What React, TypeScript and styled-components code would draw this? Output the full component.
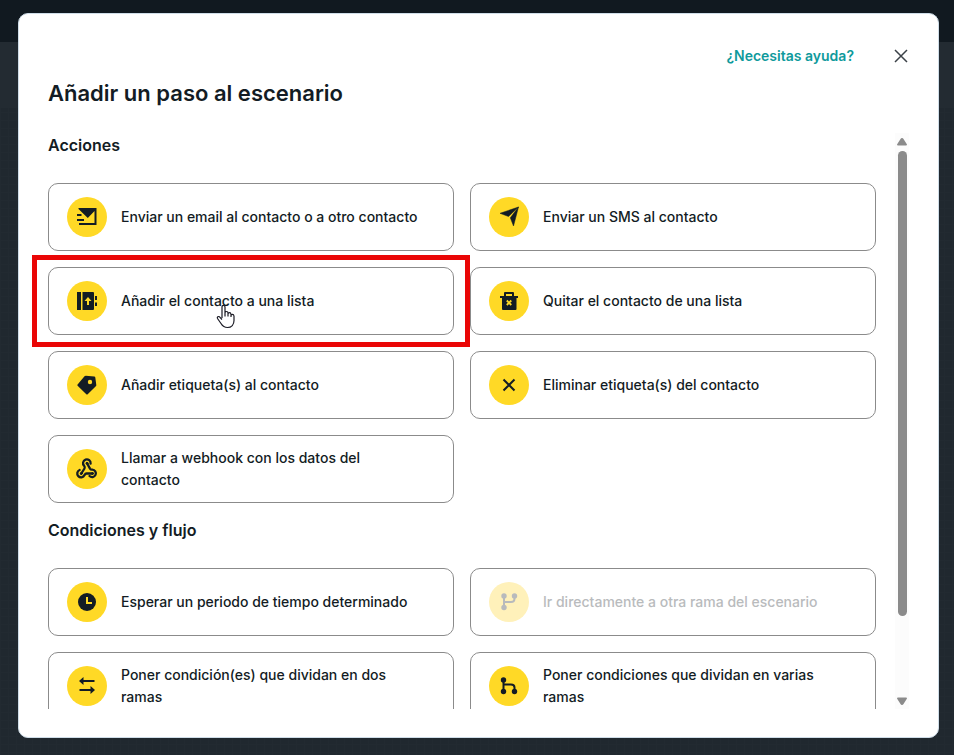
import React from "react";
import styled, { createGlobalStyle } from "styled-components";

const GlobalStyle = createGlobalStyle`
  *, *::before, *::after { box-sizing: border-box; }
  body {
    margin: 0;
    font-family: Inter, "Liberation Sans", sans-serif;
    color: #131c24;
    background: #20282f;
  }
  h1, h2, ul { margin: 0; padding: 0; }
  button { font: inherit; color: inherit; }
`;

const Backdrop = styled.div`
  display: flex;
  height: 100vh;
  padding: 13px 15px 17px 18px;
  background:
    linear-gradient(#111920 0 42px, #232b32 42px 108px, transparent 108px),
    repeating-linear-gradient(90deg, #222a31 0 1px, transparent 1px 8px),
    repeating-linear-gradient(#222a31 0 1px, transparent 1px 8px),
    #20282f;
`;

const Dialog = styled.section`
  flex: 1;
  min-width: 0;
  display: flex;
  flex-direction: column;
  padding: 28px 29px 28px 0;
  border: 1px solid #cfdde8;
  border-radius: 10px;
  background: #fff;
`;

const TopBar = styled.header`
  display: flex;
  justify-content: flex-end;
  align-items: center;
  gap: 39px;
  height: 28px;
`;

const HelpLink = styled.a`
  color: #0f9a9c;
  font-size: 14px;
  line-height: 20px;
  font-weight: 600;
  text-decoration: none;
`;

const CloseButton = styled.button`
  display: flex;
  padding: 0;
  border: 0;
  background: none;
  cursor: pointer;
`;

const Title = styled.h1`
  margin: 7px 0 0 29px;
  font-size: 22px;
  line-height: 32px;
  font-weight: 600;
`;

const Body = styled.div`
  flex: 1;
  min-height: 0;
  display: flex;
  margin-top: 24px;
`;

const ScrollArea = styled.div`
  flex: 1;
  min-width: 0;
  overflow: hidden;
  padding: 0 19px 0 29px;
`;

const SectionTitle = styled.h2`
  font-size: 16px;
  line-height: 24px;
  font-weight: 600;
`;

const StepList = styled.ul`
  display: grid;
  grid-template-columns: repeat(2, minmax(0, 1fr));
  gap: 16px;
  margin: 26px 0 15px;
  list-style: none;
`;

const StepItem = styled.li`
  position: relative;
`;

const StepCard = styled.button`
  display: flex;
  align-items: center;
  gap: 14px;
  width: 100%;
  height: 68px;
  padding: 0 34px 0 18px;
  border: 1px solid #8b8b8b;
  border-radius: 10px;
  background: #fff;
  text-align: left;
  cursor: pointer;
`;

const IconDisc = styled.span<{ $muted?: boolean }>`
  flex: none;
  display: grid;
  place-items: center;
  width: 40px;
  height: 40px;
  border-radius: 50%;
  color: ${(p) => (p.$muted ? "#b8babc" : "#131c24")};
  background: ${(p) => (p.$muted ? "#fff1ba" : "#ffd926")};
`;

const StepLabel = styled.span<{ $muted?: boolean }>`
  font-size: 14px;
  line-height: 22px;
  font-weight: 500;
  color: ${(p) => (p.$muted ? "#b9bbbd" : "inherit")};
`;

const Highlight = styled.div`
  position: absolute;
  z-index: 1;
  inset: -12px -16px;
  border: 5px solid #ea0606;
  pointer-events: none;
`;

const Pointer = styled.svg`
  position: absolute;
  z-index: 2;
  left: 168px;
  top: 37px;
  pointer-events: none;
`;

const Track = styled.div`
  flex: none;
  display: flex;
  flex-direction: column;
  align-items: center;
  gap: 5px;
  width: 14px;
  padding: 5px 0 4px;
  background: #fcfcfc;
  color: #8b8b8b;
`;

const TrackLane = styled.div`
  flex: 1;
  width: 9px;
`;

const Thumb = styled.div`
  height: 86%;
  border-radius: 5px;
  background: #8b8b8b;
`;

type IconName =
  | "email" | "send" | "addList" | "trash" | "tag" | "cross"
  | "webhook" | "clock" | "branch" | "swap" | "split";

const drawings: Record<IconName, React.ReactNode> = {
  email: (
    <g fill="currentColor">
      <path d="M3.500 3h18v17H4v-2h15.500V6L12.800 13 3.500 4z" />
      <path d="M2 9h4.500v2H2zM2 14h7v2H2z" />
    </g>
  ),
  send: <path d="M21.500 2 16.500 21l-3.200-8.200L21.500 2 11.500 11.500 3 8.300z" fill="currentColor" stroke="currentColor" strokeWidth=".5" />,
  addList: (
    <>
      <path d="M2 3h4v18H2zM7.500 3H18a1 1 0 0 1 1 1v16a1 1 0 0 1-1 1H7.500zM20 7h2v4h-2zM20 13.500h2V17h-2z" fill="currentColor" />
      <path d="m13 8 3.500 4H14v4h-2v-4H9.500z" fill="#ffd926" />
    </>
  ),
  trash: (
    <>
      <path d="M7 7V4a1 1 0 0 1 1-1h8a1 1 0 0 1 1 1v3h4v2h-1.500v11a1 1 0 0 1-1 1H6a1 1 0 0 1-1-1V9H3V7zM9 7h6V5H9z" fill="currentColor" />
      <path d="m9.800 11.500 4.500 4.500m0-4.500L9.800 16" stroke="#ffd926" strokeWidth="1.800" />
    </>
  ),
  tag: (
    <path fillRule="evenodd" d="M2.600 12.700q-.6-.6 0-1.200L9.500 3.300q.5-.6 1.300-.6l8.400.8q1 .1 1.100 1l1 7.500q.1.800-.5 1.300l-8.100 8q-.7.600-1.400 0zM15 6.800a2.200 2.200 0 1 0 0 4.400 2.200 2.200 0 0 0 0-4.400z" fill="currentColor" />
  ),
  cross: <path d="m6.500 6.500 11 11m0-11-11 11" stroke="currentColor" strokeWidth="2" />,
  webhook: (
    <g fill="none" stroke="currentColor" strokeWidth="2.300" strokeLinecap="round" strokeLinejoin="round">
      <path d="M17.500 16.500h-6c-1 0-1.500.7-2 1.600A3.800 3.800 0 1 1 4.600 13" />
      <path d="m6.300 16.500 3.200-5c.6-.9.300-1.800-.3-2.600a3.800 3.800 0 1 1 6.400-2.300" />
      <path d="m12 6.300 3 5.300c.6 1 1.300 1.200 2.300 1.100a3.700 3.700 0 1 1-2.800 6.300" />
      <g fill="currentColor" strokeWidth="1">
        <circle cx="12" cy="6.300" r="1" />
        <circle cx="6.300" cy="16.500" r="1" />
        <circle cx="17.500" cy="16.500" r="1" />
      </g>
    </g>
  ),
  clock: (
    <>
      <circle cx="12" cy="12" r="9" fill="currentColor" />
      <path d="M12 7v6h5" fill="none" stroke="#ffd926" strokeWidth="2" />
    </>
  ),
  branch: (
    <>
      <path d="M7 6v12M17.500 6v2.500q0 3.500-3.500 3.500H7" fill="none" stroke="currentColor" strokeWidth="2" />
      <g fill="currentColor">
        <circle cx="7" cy="6" r="2.700" />
        <circle cx="17.500" cy="6" r="2.700" />
        <circle cx="7" cy="17.500" r="2.700" />
      </g>
    </>
  ),
  swap: (
    <>
      <path d="M7 7h12.500M4.500 16H17" stroke="currentColor" strokeWidth="2" />
      <path d="M4 7l4.500-4v8zM20 16l-4.500-4v8z" fill="currentColor" />
    </>
  ),
  split: (
    <>
      <path d="M6.500 6v12M6.500 10.500h7.500q3.500 0 3.500 3v4" fill="none" stroke="currentColor" strokeWidth="2" />
      <g fill="currentColor">
        <circle cx="6.500" cy="6" r="2.700" />
        <circle cx="6.500" cy="17.500" r="2.700" />
        <circle cx="17.500" cy="17.500" r="2.700" />
      </g>
    </>
  ),
};

interface Step {
  icon: IconName;
  label: string;
  disabled?: boolean;
  active?: boolean;
}

const sections: { title: string; steps: Step[] }[] = [
  {
    title: "Acciones",
    steps: [
      { icon: "email", label: "Enviar un email al contacto o a otro contacto" },
      { icon: "send", label: "Enviar un SMS al contacto" },
      { icon: "addList", label: "Añadir el contacto a una lista", active: true },
      { icon: "trash", label: "Quitar el contacto de una lista" },
      { icon: "tag", label: "Añadir etiqueta(s) al contacto" },
      { icon: "cross", label: "Eliminar etiqueta(s) del contacto" },
      { icon: "webhook", label: "Llamar a webhook con los datos del contacto" },
    ],
  },
  {
    title: "Condiciones y flujo",
    steps: [
      { icon: "clock", label: "Esperar un periodo de tiempo determinado" },
      { icon: "branch", label: "Ir directamente a otra rama del escenario", disabled: true },
      { icon: "swap", label: "Poner condición(es) que dividan en dos ramas" },
      { icon: "split", label: "Poner condiciones que dividan en varias ramas" },
    ],
  },
];

function StepOption({ icon, label, disabled, active }: Step) {
  return (
    <StepItem>
      <StepCard type="button" disabled={disabled}>
        <IconDisc $muted={disabled}>
          <svg width="24" height="24" viewBox="0 0 24 24" aria-hidden="true">
            {drawings[icon]}
          </svg>
        </IconDisc>
        <StepLabel $muted={disabled}>{label}</StepLabel>
      </StepCard>
      {active && (
        <>
          <Highlight />
          <Pointer width="19" height="25" viewBox="0 0 19 25" aria-hidden="true">
            <path
              d="M6 14V3q0-1.700 1.500-1.700T9 3v6q0-1.500 1.500-1.500T12 9v1q.2-1.300 1.500-1.300T15 10.500v.8q.3-1 1.500-1t1.500 1.700v4.500c0 4-2.500 7-6.500 7-3.500 0-5-1.500-6.500-4L1.500 14.500c-.7-1.400.800-2.500 2-1.700L6 15.500M9 9v3.500M12 10v2.500M15 11v2"
              fill="#fff"
              stroke="#1a1a24"
              strokeWidth="1.200"
              strokeLinejoin="round"
            />
          </Pointer>
        </>
      )}
    </StepItem>
  );
}

export default function App() {
  return (
    <>
      <GlobalStyle />
      <Backdrop>
        <Dialog role="dialog" aria-modal="true" aria-labelledby="dialog-title">
          <TopBar>
            <HelpLink href="#ayuda">¿Necesitas ayuda?</HelpLink>
            <CloseButton type="button" aria-label="Cerrar">
              <svg width="16" height="16" viewBox="0 0 16 16" aria-hidden="true">
                <path d="m2 2 12 12M14 2 2 14" stroke="#3c4248" strokeWidth="1.500" />
              </svg>
            </CloseButton>
          </TopBar>
          <Title id="dialog-title">Añadir un paso al escenario</Title>
          <Body>
            <ScrollArea>
              {sections.map((section) => (
                <React.Fragment key={section.title}>
                  <SectionTitle>{section.title}</SectionTitle>
                  <StepList>
                    {section.steps.map((step) => (
                      <StepOption key={step.label} {...step} />
                    ))}
                  </StepList>
                </React.Fragment>
              ))}
            </ScrollArea>
            <Track aria-hidden="true">
              <svg width="10" height="8" viewBox="0 0 10 8">
                <path d="M5 0q1 0 1.500 1L10 6.500q0 1-1 1H1q-1 0-1-1L3.500 1Q4 0 5 0z" fill="currentColor" />
              </svg>
              <TrackLane>
                <Thumb />
              </TrackLane>
              <svg width="10" height="8" viewBox="0 0 10 8">
                <path d="M5 8q1 0 1.500-1L10 1.500q0-1-1-1H1q-1 0-1 1L3.500 7Q4 8 5 8z" fill="currentColor" />
              </svg>
            </Track>
          </Body>
        </Dialog>
      </Backdrop>
    </>
  );
}
